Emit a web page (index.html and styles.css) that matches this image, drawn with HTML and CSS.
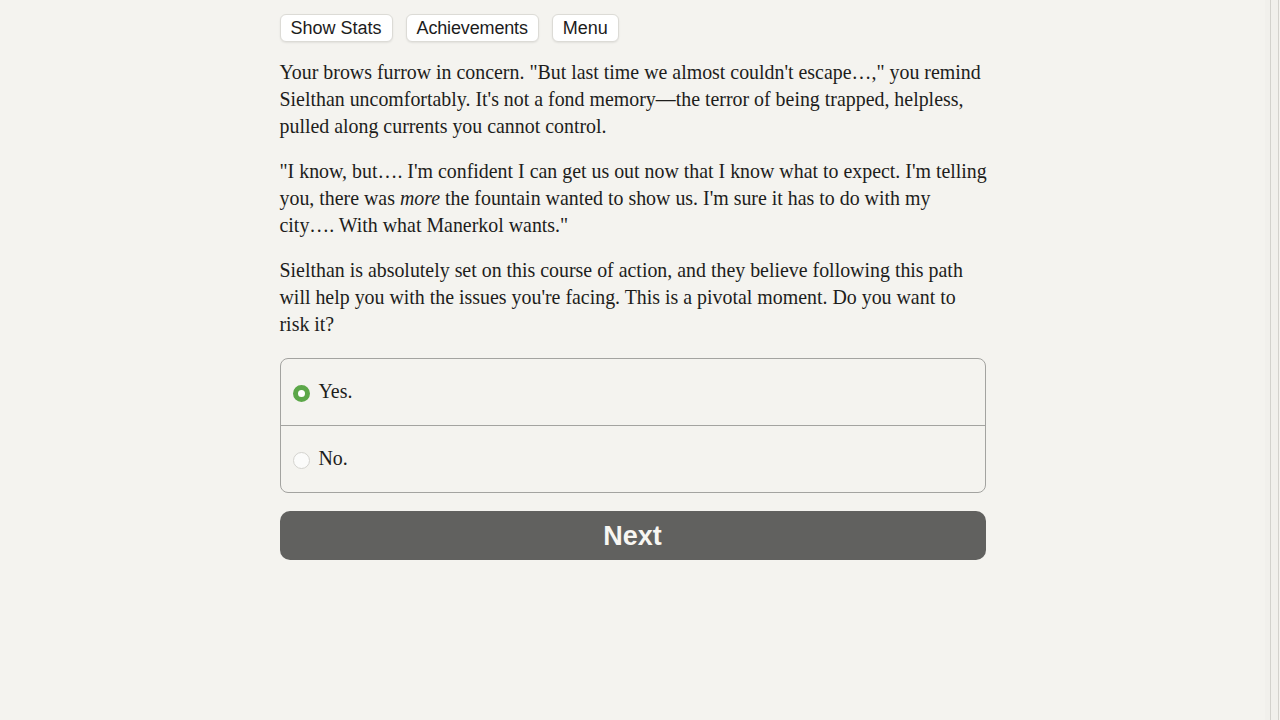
FILE: index.html
```html
<!DOCTYPE html>
<html lang="en">
<head>
<meta charset="utf-8">
<title>Choice</title>
<link rel="stylesheet" href="styles.css">
</head>
<body>
<div class="viewport">
  <main class="page">
    <nav class="toolbar">
      <button class="tool-btn">Show Stats</button>
      <button class="tool-btn">Achievements</button>
      <button class="tool-btn">Menu</button>
    </nav>
    <div class="story">
      <p>Your brows furrow in concern. "But last time we almost couldn't escape…," you remind<br>Sielthan uncomfortably. It's not a fond memory—the terror of being trapped, helpless,<br>pulled along currents you cannot control.</p>
      <p>"I know, but…. I'm confident I can get us out now that I know what to expect. I'm telling<br>you, there was <em>more</em> the fountain wanted to show us. I'm sure it has to do with my<br>city…. With what Manerkol wants."</p>
      <p>Sielthan is absolutely set on this course of action, and they believe following this path<br>will help you with the issues you're facing. This is a pivotal moment. Do you want to<br>risk it?</p>
    </div>
    <form class="choices">
      <label class="choice">
        <span class="radio radio-on"></span>
        <span class="choice-text">Yes.</span>
      </label>
      <label class="choice">
        <span class="radio"></span>
        <span class="choice-text">No.</span>
      </label>
    </form>
    <button class="next-btn">Next</button>
  </main>
  <div class="scrolltrack"><div class="scrollline"></div></div>
</div>
</body>
</html>
```
FILE: styles.css
```css
html, body {
  margin: 0;
  padding: 0;
  height: 100%;
  background: #f4f3ef;
}
.viewport {
  display: flex;
  height: 720px;
  overflow: hidden;
}
.page {
  flex: 1;
  display: flex;
  flex-direction: column;
  align-items: center;
  padding-top: 14px;
}
.toolbar, .story, .choices, .next-btn {
  width: 706px;
  box-sizing: border-box;
}
.toolbar {
  display: flex;
  gap: 13px;
  height: 28px;
}
.tool-btn {
  font-family: "Liberation Sans", Arial, sans-serif;
  font-size: 18px;
  color: #1c1c1c;
  background: #ffffff;
  border: 1px solid #dcdbd6;
  border-radius: 6px;
  box-shadow: 0 1px 2px rgba(0,0,0,0.08);
  padding: 0 10px;
  height: 28px;
  line-height: 26px;
}
.tool-btn:nth-child(2) {
  letter-spacing: -0.15px;
}
.story {
  margin-top: 17px;
  font-family: "Liberation Serif", "Times New Roman", serif;
  font-size: 19.9px;
  line-height: 27px;
  color: #1d1d1b;
}
.story p {
  margin: 0 0 18px 0;
  white-space: nowrap;
}
.story p:last-child {
  margin-bottom: 0;
}
.choices {
  margin-top: 20px;
  border: 1px solid #a3a3a0;
  border-radius: 8px;
  display: flex;
  flex-direction: column;
}
.choice {
  display: flex;
  align-items: center;
  height: 66px;
  padding-left: 12px;
  gap: 9px;
  font-family: "Liberation Serif", "Times New Roman", serif;
  font-size: 19.9px;
  color: #1d1d1b;
}
.choice + .choice {
  border-top: 1px solid #a3a3a0;
}
.choice-text {
  position: relative;
  top: -1px;
}
.radio {
  width: 17px;
  height: 17px;
  border-radius: 50%;
  box-sizing: border-box;
  background: #fbfbfa;
  border: 1px solid #d4d3cf;
  margin-top: 2px;
}
.radio-on {
  background: #ffffff;
  border: 5px solid #5ca749;
}
.next-btn {
  margin-top: 18px;
  height: 49px;
  background: #61615f;
  color: #f7f6f2;
  border: none;
  border-radius: 10px;
  font-family: "Liberation Sans", Arial, sans-serif;
  font-weight: bold;
  font-size: 27px;
  padding: 1px 0 0 0;
}
.scrolltrack {
  width: 15px;
  flex: none;
  background: #f1f0ec;
  display: flex;
  justify-content: flex-start;
  padding-left: 5px;
  box-sizing: border-box;
  border-right: 1px solid #f4f3ef;
}
.scrollline {
  width: 9px;
  height: 100%;
  box-sizing: border-box;
  border-left: 1px solid #d3d2cd;
  border-right: 1px solid #d3d2cd;
}
```
